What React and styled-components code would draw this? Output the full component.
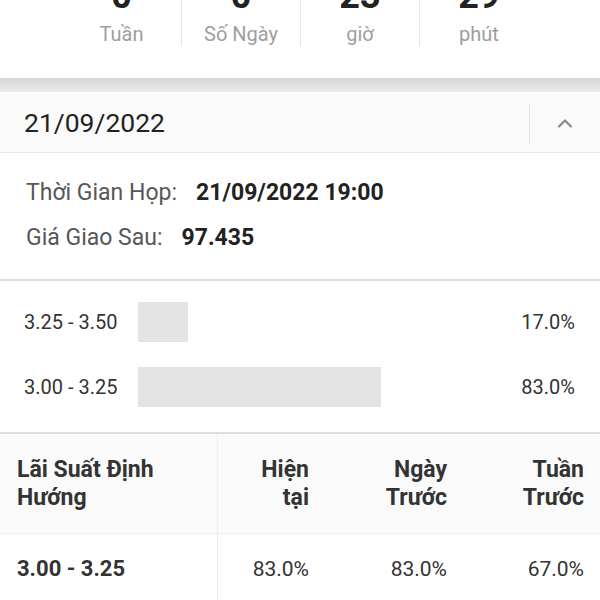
import React from "react";
import styled, { createGlobalStyle } from "styled-components";

const Global = createGlobalStyle`
  html, body { margin: 0; padding: 0; background: #fff; }
  body { font-family: Roboto, "Noto Sans", "Liberation Sans", sans-serif; color: #222; overflow: hidden; }
  * { box-sizing: border-box; }
`;

const Page = styled.div`
  width: 600px;
  height: 600px;
  overflow: hidden;
  display: flex;
  flex-direction: column;
`;

const Counter = styled.div`
  display: flex;
  justify-content: center;
  margin-top: -24px;
  height: 102px;
  flex-shrink: 0;
`;

const CounterCell = styled.div`
  width: 119px;
  height: 70px;
  display: flex;
  flex-direction: column;
  align-items: center;
  border-left: ${(p) => (p.$first ? "none" : "1.5px solid #e6e6e6")};
`;

const Num = styled.div`
  font-size: 36px;
  line-height: 40px;
  font-weight: 700;
  color: #222;
`;

const Unit = styled.div`
  margin-top: 6px;
  font-size: 20px;
  line-height: 24px;
  color: #9e9e9e;
`;

const Band = styled.div`
  height: 14px;
  flex-shrink: 0;
  background: linear-gradient(#d6d6d6, #dedede 40%, #ebebeb);
`;

const Header = styled.div`
  height: 61px;
  flex-shrink: 0;
  display: flex;
  align-items: center;
  background: #fafafa;
  border-bottom: 1px solid #e8e8e8;
  padding: 1px 0 0 24px;
`;

const DateText = styled.div`
  flex: 1;
  font-size: 26.5px;
  color: #222;
`;

const Toggle = styled.div`
  width: 71px;
  height: 40px;
  border-left: 1.5px solid #e4e4e4;
  display: flex;
  align-items: center;
  justify-content: center;
  color: #8a8a8a;
`;

const Info = styled.div`
  height: 128px;
  flex-shrink: 0;
  padding: 27px 0 0 26px;
  display: flex;
  flex-direction: column;
  gap: 19px;
  border-bottom: 2px solid #dddddd;
`;

const InfoRow = styled.div`
  display: flex;
  align-items: baseline;
  font-size: 23px;
  line-height: 26px;
`;

const InfoLabel = styled.span`
  color: #575757;
`;

const InfoValue = styled.span`
  margin-left: 19px;
  font-weight: 700;
  color: #222;
`;

const Bars = styled.div`
  height: 153px;
  flex-shrink: 0;
  padding-top: 21px;
  display: flex;
  flex-direction: column;
  gap: 25px;
  border-bottom: 2px solid #dddddd;
`;

const BarRow = styled.div`
  display: flex;
  align-items: center;
  height: 40px;
  padding: 0 25px 0 24px;
`;

const BarLabel = styled.div`
  width: 114px;
  font-size: 20px;
  color: #333;
`;

const Track = styled.div`
  width: 293px;
  height: 40px;
`;

const Fill = styled.div`
  height: 100%;
  background: #e3e3e3;
`;

const BarPct = styled.div`
  flex: 1;
  text-align: right;
  font-size: 20px;
  color: #333;
`;

const Table = styled.div`
  display: grid;
  grid-template-columns: 218px 101px 138px 1fr;
  grid-template-rows: 100px 70px 1fr;
  flex: 1;
`;

const Cell = styled.div`
  display: flex;
  flex-direction: column;
  justify-content: center;
  align-items: ${(p) => (p.$left ? "flex-start" : "flex-end")};
  text-align: ${(p) => (p.$left ? "left" : "right")};
  padding: ${(p) => (p.$left ? "0 0 0 17px" : p.$last ? "0 16px 0 0" : "0 10px 0 0")};
  background: ${(p) => (p.$head ? "#fafafa" : "#fff")};
  border-bottom: ${(p) => (p.$head ? "1px solid #eeeeee" : "none")};
  border-right: ${(p) => (p.$left ? "1.5px solid #eeeeee" : "none")};
  font-size: ${(p) => (p.$head ? "23px" : p.$left ? "22px" : "21px")};
  line-height: 28px;
  font-weight: ${(p) => (p.$head || p.$left ? 700 : 400)};
  color: #333;
`;

const Filler = styled.div`
  grid-column: 1 / 2;
  border-right: 1.5px solid #eeeeee;
`;

const Chevron = () => (
  <svg width="18" height="12" viewBox="0 0 18 12" fill="none">
    <path d="M3 9.5 L9 3.5 L15 9.5" stroke="currentColor" strokeWidth="2.2" strokeLinecap="round" strokeLinejoin="round" />
  </svg>
);

const counters = [
  { n: "0", u: "Tuần" },
  { n: "0", u: "Số Ngày" },
  { n: "23", u: "giờ" },
  { n: "29", u: "phút" },
];

const bars = [
  { label: "3.25 - 3.50", pct: 17 },
  { label: "3.00 - 3.25", pct: 83 },
];

export default function App() {
  return (
    <Page>
      <Global />
      <Counter>
        {counters.map((c, i) => (
          <CounterCell key={c.u} $first={i === 0}>
            <Num>{c.n}</Num>
            <Unit>{c.u}</Unit>
          </CounterCell>
        ))}
      </Counter>
      <Band />
      <Header>
        <DateText>21/09/2022</DateText>
        <Toggle>
          <Chevron />
        </Toggle>
      </Header>
      <Info>
        <InfoRow>
          <InfoLabel>Thời Gian Họp:</InfoLabel>
          <InfoValue>21/09/2022 19:00</InfoValue>
        </InfoRow>
        <InfoRow>
          <InfoLabel>Giá Giao Sau:</InfoLabel>
          <InfoValue>97.435</InfoValue>
        </InfoRow>
      </Info>
      <Bars>
        {bars.map((b) => (
          <BarRow key={b.label}>
            <BarLabel>{b.label}</BarLabel>
            <Track>
              <Fill style={{ width: `${b.pct}%` }} />
            </Track>
            <BarPct>{b.pct.toFixed(1)}%</BarPct>
          </BarRow>
        ))}
      </Bars>
      <Table>
        <Cell $head $left>
          <span>Lãi Suất Định</span>
          <span>Hướng</span>
        </Cell>
        <Cell $head>
          <span>Hiện</span>
          <span>tại</span>
        </Cell>
        <Cell $head>
          <span>Ngày</span>
          <span>Trước</span>
        </Cell>
        <Cell $head $last>
          <span>Tuần</span>
          <span>Trước</span>
        </Cell>
        <Cell $left>3.00 - 3.25</Cell>
        <Cell>83.0%</Cell>
        <Cell>83.0%</Cell>
        <Cell $last>67.0%</Cell>
        <Filler />
      </Table>
    </Page>
  );
}
